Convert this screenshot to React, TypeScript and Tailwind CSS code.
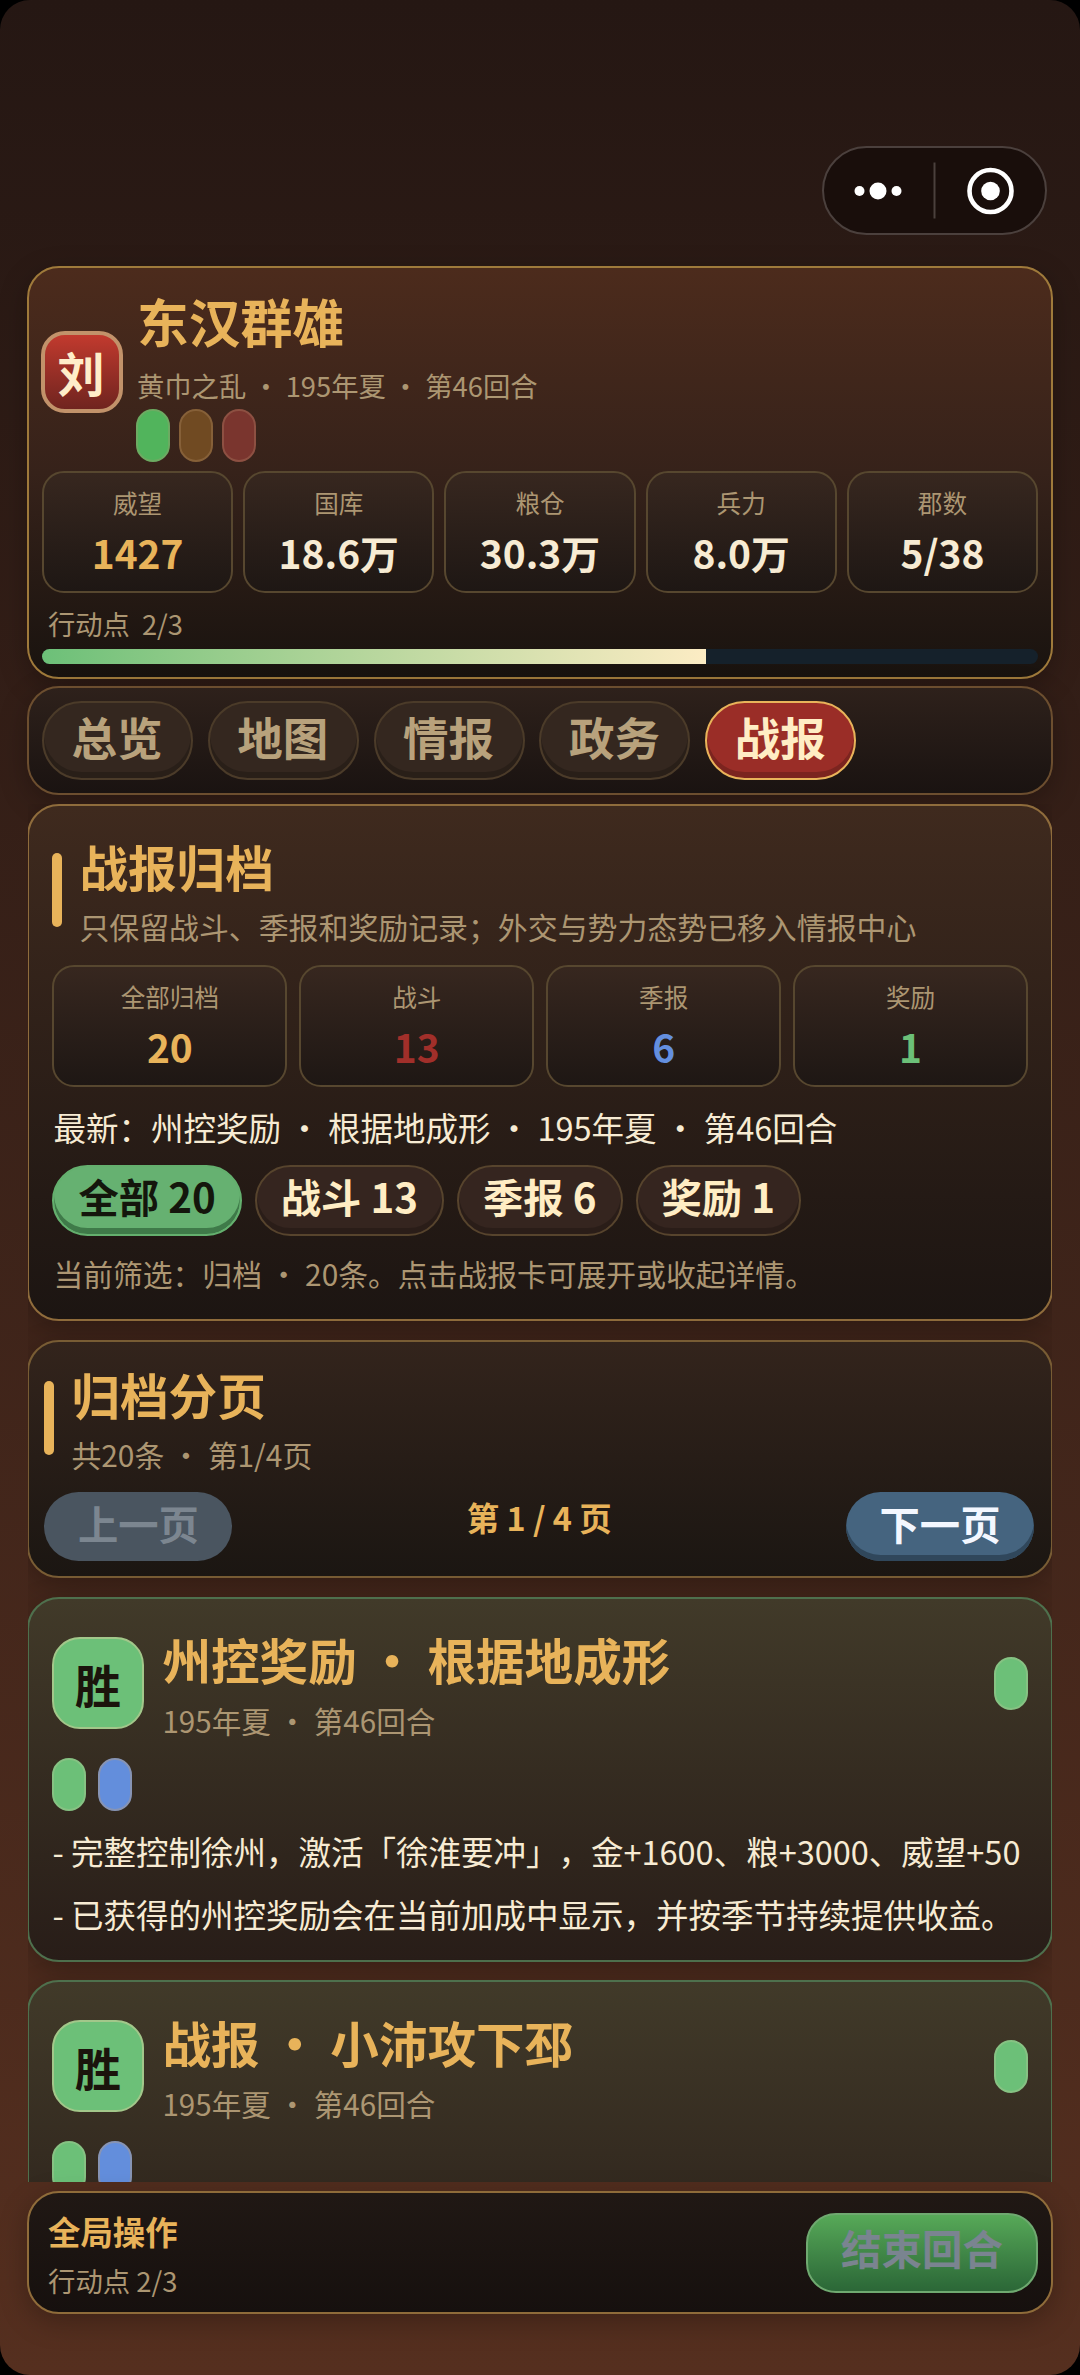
import clsx from 'clsx'
import type { ReactNode } from 'react'

const resources = [
  { label: '威望', value: '1427', color: 'text-[#e8b35a]' },
  { label: '国库', value: '18.6万', color: 'text-[#f7ebd3]' },
  { label: '粮仓', value: '30.3万', color: 'text-[#f7ebd3]' },
  { label: '兵力', value: '8.0万', color: 'text-[#f7ebd3]' },
  { label: '郡数', value: '5/38', color: 'text-[#f7ebd3]' },
]

const archive = [
  { label: '全部归档', value: '20', color: 'text-[#e8b35a]' },
  { label: '战斗', value: '13', color: 'text-[#a12f2a]' },
  { label: '季报', value: '6', color: 'text-[#648fdf]' },
  { label: '奖励', value: '1', color: 'text-[#6cc078]' },
]

const tabs = ['总览', '地图', '情报', '政务', '战报']
const filters = ['全部 20', '战斗 13', '季报 6', '奖励 1']

const reports = [
  {
    title: '州控奖励 · 根据地成形',
    time: '195年夏 · 第46回合',
    lines: [
      '- 完整控制徐州，激活「徐淮要冲」，金+1600、粮+3000、威望+50',
      '- 已获得的州控奖励会在当前加成中显示，并按季节持续提供收益。',
    ],
  },
  { title: '战报 · 小沛攻下邳', time: '195年夏 · 第46回合', lines: [] },
]

function Stat({ label, value, color }: { label: string; value: string; color: string }) {
  return (
    <div className="h-[122px] flex-1 rounded-[22px] border-2 border-[#57472f] bg-linear-to-b from-[#37271f] to-[#1e1714] pt-[7px] text-center">
      <div className="text-[24.6px] leading-[44px] text-[#ac9672]">{label}</div>
      <div className={clsx('-mt-px text-[38.9px] leading-[58px] font-bold', color)}>{value}</div>
    </div>
  )
}

function Heading({ title, sub }: { title: string; sub: string }) {
  return (
    <div className="flex items-center gap-[17px]">
      <div className="h-[74px] w-[10px] rounded-full bg-[#e8b35a]" />
      <div>
        <div className="text-[48.6px] leading-[74px] font-bold text-[#e8b35a]">{title}</div>
        <div className="-mt-px text-[29.9px] leading-[48px] text-[#ac9672]">{sub}</div>
      </div>
    </div>
  )
}

function Tag({ className }: { className: string }) {
  return <div className={clsx('h-[53px] w-[34px] shrink-0 rounded-full border-2', className)} />
}

function Panel({ className, children }: { className: string; children: ReactNode }) {
  return (
    <section className={clsx('shrink-0 rounded-[32px] border-2 shadow-[0_8px_28px_rgba(0,0,0,0.25)]', className)}>
      {children}
    </section>
  )
}

function Report({ title, time, lines }: { title: string; time: string; lines: string[] }) {
  return (
    <Panel className="mb-[18px] h-[365px] border-[#4e704d] bg-linear-to-b from-[#413a29] to-[#281d18] pt-[23px] pr-[23px] pl-[23.4px]">
      <div className="flex items-center">
        <div className="flex size-[92px] items-center justify-center rounded-[28px] border-2 border-[#a2c78a] bg-[#6cc078] pr-px text-[46px] leading-[60px] font-bold text-[#1b140c]">
          胜
        </div>
        <div className="mt-px -mb-px ml-[18px] flex-1">
          <div className="text-[48.6px] leading-[73px] font-bold text-[#e8b35a]">{title}</div>
          <div className="mt-px text-[29.6px] leading-[48px] text-[#ac9672]">{time}</div>
        </div>
        <Tag className="border-[#86c283] bg-[#6cc078]" />
      </div>
      <div className="mt-[14px] flex gap-[11.5px]">
        <Tag className="border-[#86c283] bg-[#6cc078]" />
        <Tag className="border-[#8794b4] bg-[#638edc]" />
      </div>
      <div className="mt-[8px] text-[32.5px] leading-[63px] whitespace-nowrap text-[#f7ebd3]">
        {lines.map((line) => (
          <div key={line}>{line}</div>
        ))}
      </div>
    </Panel>
  )
}

export default function App() {
  return (
    <div className="h-[2375px] w-[1080px] overflow-hidden bg-black">
      <div
        lang="zh-CN"
        className="flex h-full flex-col rounded-[30px] bg-linear-to-b from-[#251713] to-[#552f1f] px-[27px] pt-[146px] font-['Noto_Sans_CJK_SC',sans-serif] [text-spacing-trim:space-all]"
      >
        <div className="mr-[6px] flex h-[89px] w-[225px] shrink-0 items-center self-end rounded-full border-2 border-[#4b403d] bg-[#190e0b]">
          <svg viewBox="0 0 221 85" className="h-[85px] w-[221px]">
            <circle cx="35.500" cy="43" r="5" fill="#fff" />
            <circle cx="54" cy="43" r="8.500" fill="#fff" />
            <circle cx="72.500" cy="43" r="5" fill="#fff" />
            <path d="M110.500 14.500v56" stroke="#4b403d" strokeWidth="2" />
            <circle cx="166.500" cy="43" r="21" fill="none" stroke="#fff" strokeWidth="4.600" />
            <circle cx="166.500" cy="43" r="9.300" fill="#fff" />
          </svg>
        </div>

        <Panel className="mt-[31px] border-[#9f7a3b] bg-linear-to-b from-[#4c2b1c] via-[#36221a] to-[#19130f] px-[13px] pt-[14px] pb-[13px]">
          <div className="flex items-center gap-[14px]">
            <div className="-ml-px flex size-[82px] items-center justify-center rounded-[24px] border-4 border-[#c2926a] bg-linear-to-b from-[#c23a2e] to-[#70241f] pr-[2px] text-[47px] leading-[60px] font-bold text-[#ffedc9]">
              刘
            </div>
            <div>
              <div className="text-[51.8px] leading-[78px] font-bold text-[#e8b35a]">东汉群雄</div>
              <div className="mt-px text-[27.3px] leading-[48px] text-[#ac9672]">黄巾之乱 · 195年夏 · 第46回合</div>
              <div className="-ml-px flex gap-[9px]">
                <Tag className="border-[#6cab62] bg-[#51b45c]" />
                <Tag className="border-[#866038] bg-[#704a22]" />
                <Tag className="border-[#8d5042] bg-[#7a352e]" />
              </div>
            </div>
          </div>
          <div className="mt-[9px] flex gap-[10px]">
            {resources.map((item) => (
              <Stat key={item.label} {...item} />
            ))}
          </div>
          <div className="mt-[11px] mb-[7px] flex gap-[12px] pl-[6px] text-[27.3px] leading-[38px] text-[#ac9672]">
            <span>行动点</span>
            <span>2/3</span>
          </div>
          <div className="h-[15px] overflow-hidden rounded-full bg-[#15212b]">
            <div className="h-full w-2/3 bg-linear-to-r from-[#6cc078] to-[#fcecc4]" />
          </div>
        </Panel>

        <Panel className="mt-[7px] flex h-[109px] gap-[14.8px] border-[#6c4e2f] bg-linear-to-b from-[#2e211b] to-[#1a1311] px-[13px] pt-[13px]">
          {tabs.map((tab) => (
            <button
              key={tab}
              className={clsx(
                'h-[79px] w-[151px] rounded-full border-2 pr-px pb-[9px] text-[45.5px] leading-[60px] font-bold shadow-[inset_0_-6px_0_rgba(0,0,0,0.2)]',
                tab === '战报'
                  ? 'border-[#e8b35a] bg-[#9a2d27] text-[#ffedc4]'
                  : 'border-[#4b3b29] bg-[#34271f] text-[#b8a27c]',
              )}
            >
              {tab}
            </button>
          ))}
        </Panel>

        <main className="mx-px mt-[9px] flex h-[1378px] shrink-0 flex-col overflow-hidden">
          <div className="-mx-px flex flex-col">
            <Panel className="border-[#8f6c3c] bg-linear-to-b from-[#3f2a1e] to-[#1c1512] pt-[23px] pr-[23px] pb-[24px] pl-[23.4px]">
              <Heading title="战报归档" sub="只保留战斗、季报和奖励记录；外交与势力态势已移入情报中心" />
              <div className="mt-[15px] flex gap-[12px]">
                {archive.map((item) => (
                  <Stat key={item.label} {...item} />
                ))}
              </div>
              <div className="mt-[16px] pl-px text-[32.5px] leading-[48px] text-[#f7ebd3]">
                最新：州控奖励 · 根据地成形 · 195年夏 · 第46回合
              </div>
              <div className="mt-[14px] flex gap-[13px]">
                {filters.map((filter, i) => (
                  <button
                    key={filter}
                    className={clsx(
                      'h-[71px] rounded-full border-2 px-[24px] pb-[9px] text-[40.3px] leading-[58px] font-bold',
                      i === 0
                        ? 'border-[#64b06e] bg-[#66b171] text-[#14160c] shadow-[inset_0_-6px_0_#3f7a49]'
                        : 'border-[#57442d] bg-[#35251f] text-[#ffedc4] shadow-[inset_0_-6px_0_rgba(0,0,0,0.2)]',
                    )}
                  >
                    {filter}
                  </button>
                ))}
              </div>
              <div className="mt-[15px] pl-px text-[29.8px] leading-[44px] text-[#ac9672]">
                当前筛选：归档 · 20条。点击战报卡可展开或收起详情。
              </div>
            </Panel>

            <Panel className="mt-[19px] mb-[19px] border-[#785c34] bg-linear-to-b from-[#33241c] to-[#1b1612] pt-[15px] pr-[17px] pb-[15px] pl-[15.4px]">
              <Heading title="归档分页" sub="共20条 · 第1/4页" />
              <div className="mt-[14px] flex justify-between">
                <button className="h-[69px] w-[188px] rounded-full bg-[#4a5560] pb-[8px] text-[40.3px] leading-[58px] font-bold text-[#7c8690]">
                  上一页
                </button>
                <span className="text-[32.4px] leading-[49px] font-bold text-[#e8b35a]">第 1 / 4 页</span>
                <button className="h-[69px] w-[188px] rounded-full bg-[#45647f] pb-[8px] text-[40.3px] leading-[58px] font-bold text-[#f3f7ff] shadow-[inset_0_-6px_0_#30475b]">
                  下一页
                </button>
              </div>
            </Panel>

            {reports.map((report) => (
              <Report key={report.title} {...report} />
            ))}
          </div>
        </main>

        <Panel className="mt-[9px] flex h-[123px] items-center justify-between border-[#8f6c3a] bg-linear-to-b from-[#201814] to-[#16100e] pr-[13px] pl-[19px]">
          <div>
            <div className="text-[32.4px] leading-[56px] font-bold text-[#e8b35a]">全局操作</div>
            <div className="text-[27.4px] leading-[43px] text-[#ac9672]">行动点 2/3</div>
          </div>
          <button className="h-[80px] w-[232px] rounded-[30px] border-2 border-[#6fa970] bg-linear-to-b from-[#57a958] to-[#2b6737] pb-[9px] text-[40.5px] leading-[60px] font-bold text-[#7a8490]">
            结束回合
          </button>
        </Panel>
      </div>
    </div>
  )
}
